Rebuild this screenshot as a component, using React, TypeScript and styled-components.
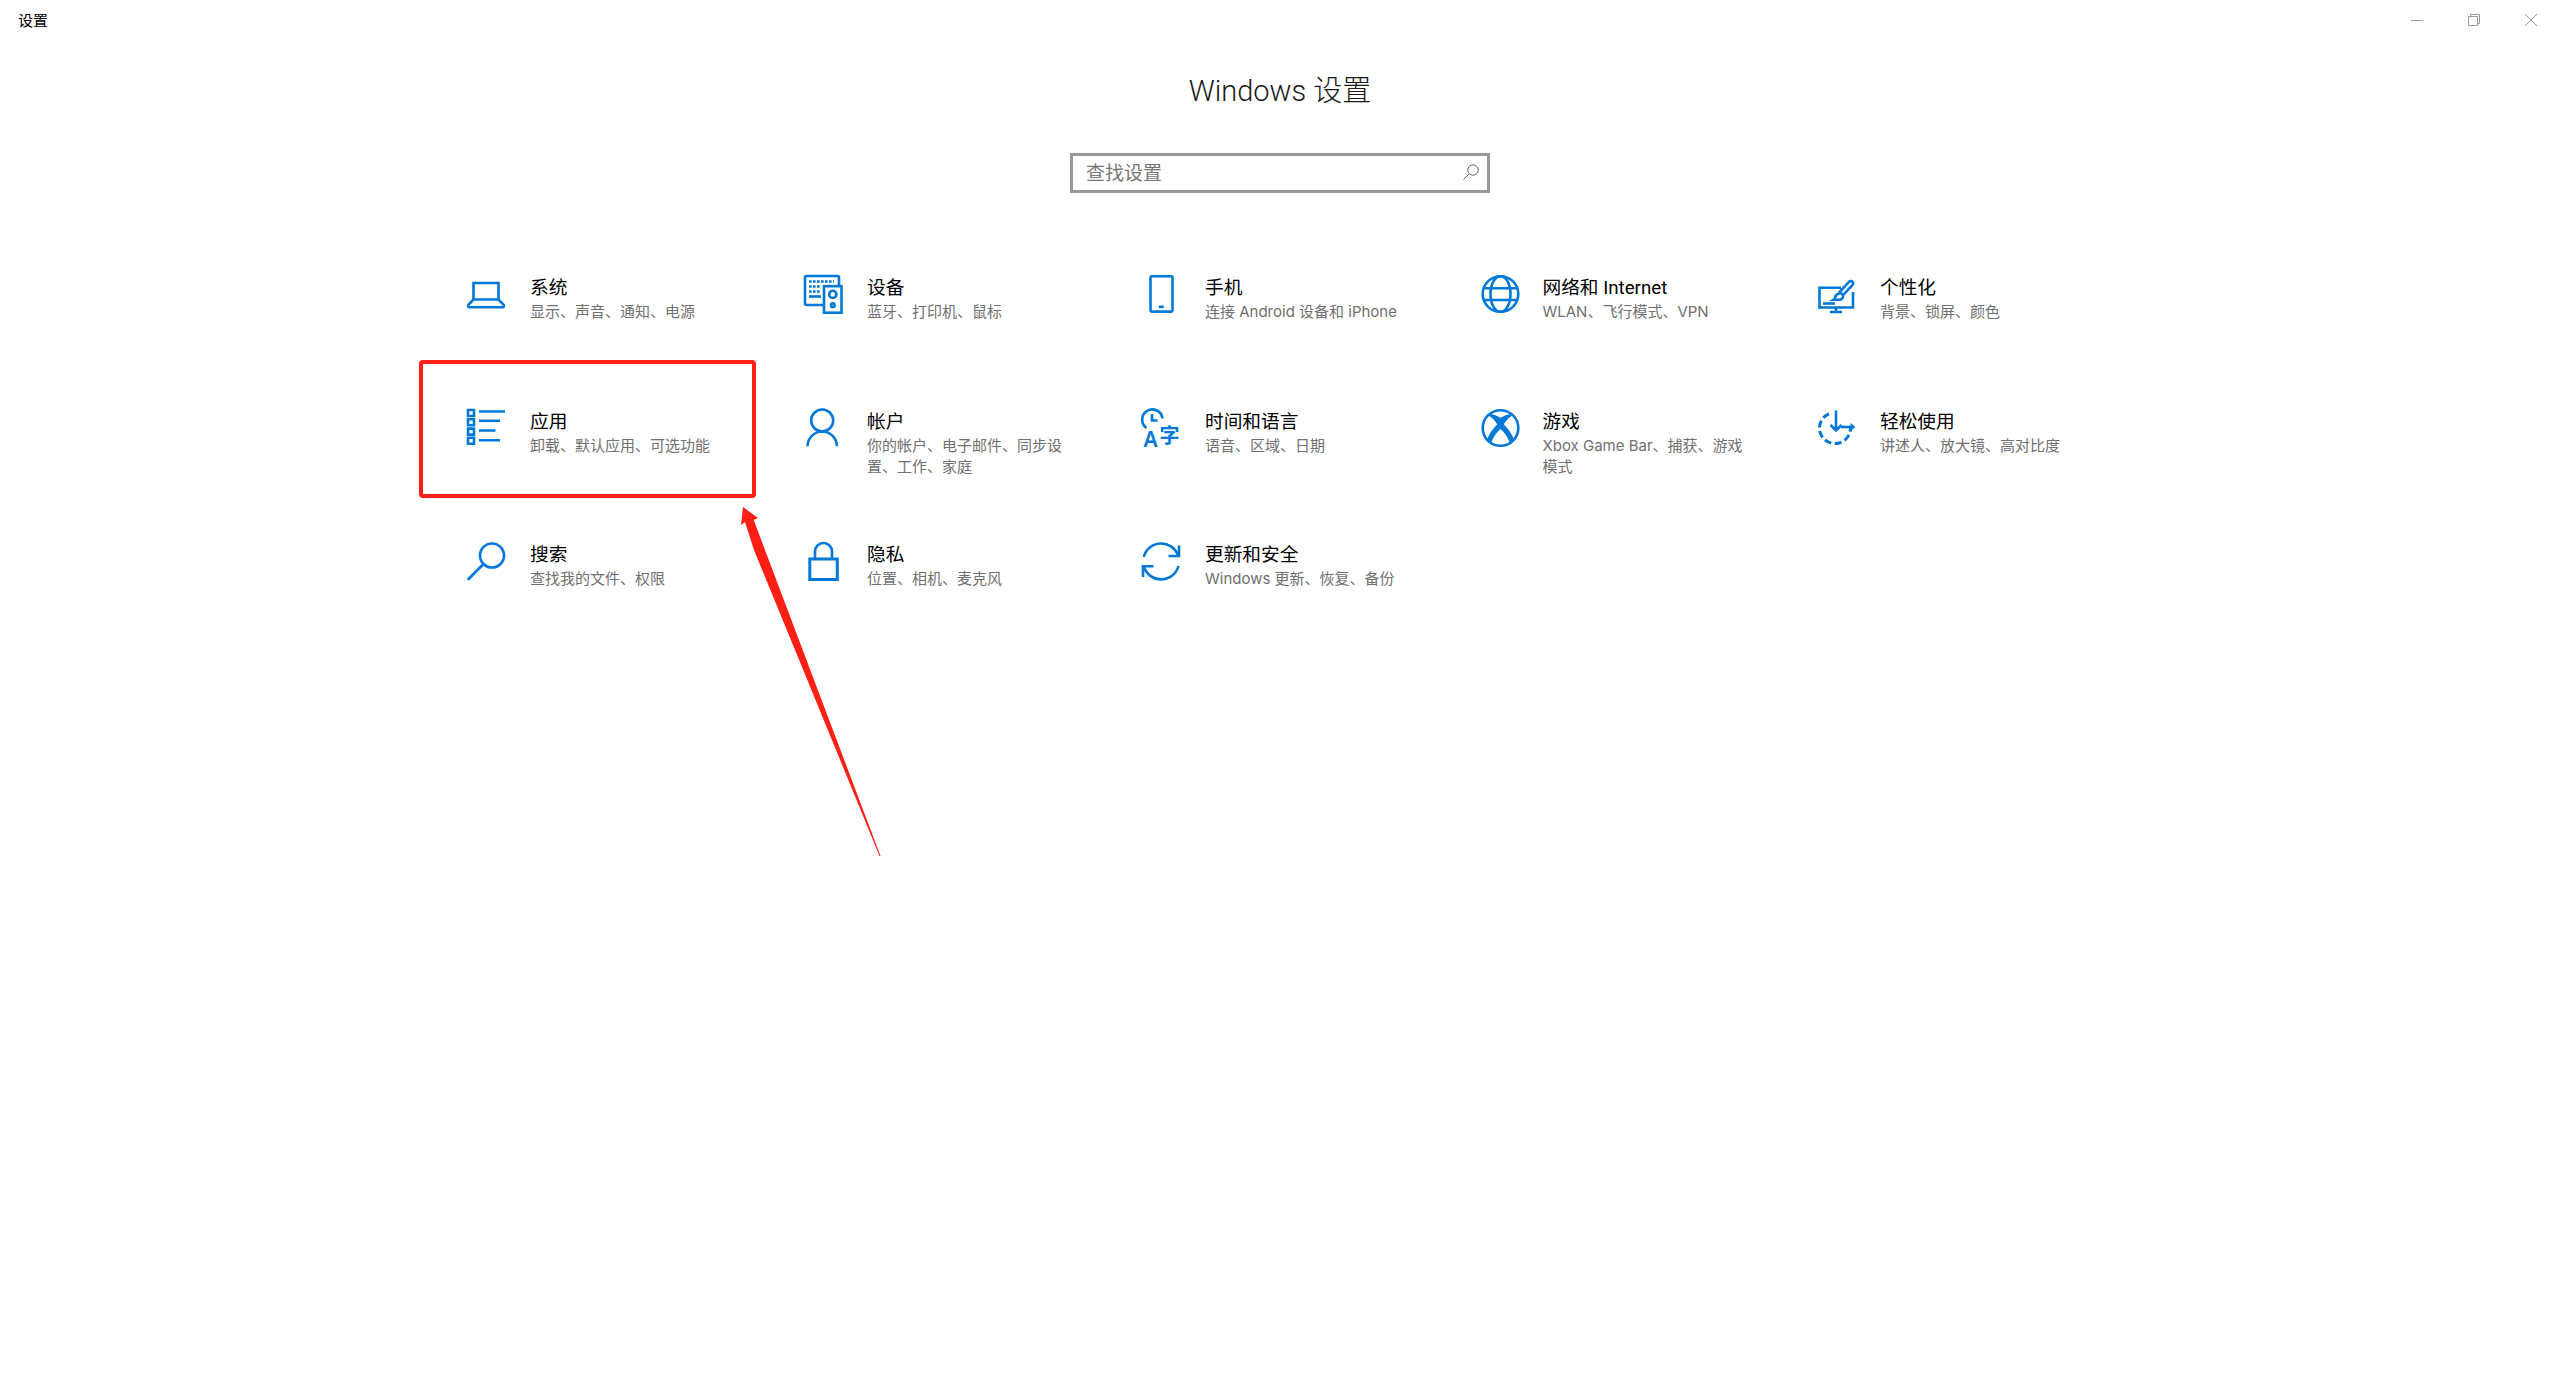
import React from "react";
import styled, { createGlobalStyle } from "styled-components";

const BLUE = "#0078d7";

const GlobalStyle = createGlobalStyle`
  html, body {
    margin: 0;
    padding: 0;
    background: #fff;
  }
  body {
    font-family: "Noto Sans", "Noto Sans CJK SC", sans-serif;
    color: #000;
  }
`;

const Page = styled.div`
  position: relative;
  width: 2560px;
  height: 1390px;
  overflow: hidden;
  background: #fff;
`;

const TitleBar = styled.header`
  display: flex;
  align-items: center;
  justify-content: space-between;
  height: 40px;
  padding-left: 18px;
`;

const WindowTitle = styled.span`
  font-size: 15px;
  line-height: 40px;
`;

const WindowControls = styled.div`
  display: flex;
  margin-right: 1px;
`;

const ControlButton = styled.div`
  display: flex;
  align-items: center;
  justify-content: center;
  width: 57px;
  height: 40px;
`;

const Heading = styled.h1`
  margin: 31px 0 0;
  font-family: Roboto, "Noto Sans CJK SC", sans-serif;
  font-size: 29px;
  line-height: 40px;
  font-weight: 300;
  text-align: center;
  color: #1a1a1a;
`;

const SearchBox = styled.div`
  display: flex;
  align-items: center;
  justify-content: space-between;
  box-sizing: border-box;
  width: 420px;
  height: 40px;
  margin: 42px auto 0;
  padding: 0 8px 2px 13px;
  border: 3px solid #999;
`;

const SearchHint = styled.span`
  font-size: 19px;
  color: #767676;
`;

const Grid = styled.main`
  display: grid;
  grid-template-columns: 337px 338px 337.5px 337.5px 337.5px;
  grid-auto-rows: 133.5px;
  margin: 35px 0 0 420px;
`;

const Tile = styled.section`
  position: relative;
  display: flex;
  padding: 46px 0 0 46px;
  box-sizing: border-box;
`;

const Highlight = styled.div`
  position: absolute;
  top: -2px;
  left: -1px;
  right: 1.5px;
  bottom: -3px;
  border: 4px solid #ff1f14;
  border-radius: 4px;
`;

const IconSlot = styled.div`
  flex: none;
  width: 40px;
  height: 40px;
  margin-right: 24px;

  svg {
    display: block;
    overflow: visible;
  }
`;

const TileText = styled.div`
  width: 212px;
`;

const TileTitle = styled.div`
  margin-top: 1px;
  font-family: Roboto, "Noto Sans CJK SC", sans-serif;
  font-size: 18.7px;
  line-height: 26px;
  color: #000;
`;

const TileSub = styled.div`
  font-family: Inter, "Noto Sans CJK SC", sans-serif;
  font-size: 15px;
  line-height: 21px;
  color: #707070;
`;

const ArrowLayer = styled.svg`
  position: absolute;
  left: 730px;
  top: 500px;
  pointer-events: none;
`;

const Line = styled.g`
  fill: none;
  stroke: ${BLUE};
  stroke-width: 2.6;
`;

const Icon = ({ children }: { children: React.ReactNode }) => (
  <svg width="40" height="40" viewBox="0 0 40 40">
    <Line>{children}</Line>
  </svg>
);

const LaptopIcon = () => (
  <Icon>
    <path d="M7.5 26V9h25v17" />
    <path d="M7.5 25.5 2.2 31v1.2c0 .6.4 1 1 1h33.6c.6 0 1-.4 1-1V31l-5.3-5.5z" />
  </Icon>
);

const DevicesIcon = () => (
  <Icon>
    <path d="M20 31H3.5A1.5 1.5 0 0 1 2 29.5V3.500A1.500 1.500 0 0 1 3.500 2h31A1.500 1.500 0 0 1 36 3.500V12" />
    <path d="M6 7.500h25M6 12.500h12M6 17.500h12" strokeDasharray="2.600 1.400" />
    <path d="M6 22.500h12" />
    <rect x="21" y="12.200" width="17.500" height="26.500" />
    <circle cx="29.800" cy="20.400" r="3.600" />
    <circle cx="29.800" cy="31.200" r="1.800" />
  </Icon>
);

const PhoneIcon = () => (
  <Icon>
    <rect x="9.500" y="2.200" width="22" height="35.400" rx="1.500" />
    <path d="M17.800 32.800h5" />
  </Icon>
);

const GlobeIcon = () => (
  <Icon>
    <circle cx="21.500" cy="20" r="17.800" />
    <ellipse cx="21.500" cy="20" rx="10" ry="17.800" />
    <path d="M4 14.300h35M4 26h35" />
  </Icon>
);

const BrushIcon = () => (
  <Icon>
    <path d="M25 13.800H3.500v19.700H37V18" />
    <path d="M20 33.500v4M14 38h12" />
    <path d="M36.400 7.800a2.200 2.200 0 0 0-3.200-.2L23.600 18l3.400 3.200 9.600-10.400a2.200 2.200 0 0 0-.2-3z" />
    <path d="M23.800 19.500c-3 .2-4.200 2-4.600 3.600-.3 1.200-.5 2-1.500 2.600h5.600c2.600 0 4-2 3.700-3.600" />
    <path d="M7 29.500h12" />
  </Icon>
);

const ListIcon = () => (
  <Icon>
    <path d="M2 2h6v6H2zM2 11.300h6v6H2zM2 20.600h6v6H2zM2 29.800h6v6H2z" />
    <path d="M13 3.500h26M13 12.800h21M13 22.500h16.500M13 32.200h21" />
  </Icon>
);

const PersonIcon = () => (
  <Icon>
    <circle cx="19.200" cy="12.500" r="11" />
    <path d="M4.500 38.200a14.700 14.700 0 0 1 29.400 0" />
  </Icon>
);

const LanguageIcon = () => (
  <svg width="40" height="40" viewBox="0 0 40 40">
    <Line>
      <path d="M5.500 20a10.200 10.200 0 1 1 16-9.600" />
      <path d="M11 6v6.500h5.500" />
    </Line>
    <text x="2.500" y="38.500" fontSize="21" fontWeight="600" fill={BLUE}>
      A
    </text>
    <text x="18.500" y="34.500" fontSize="20" fontWeight="700" fill={BLUE}>
      字
    </text>
  </svg>
);

const XboxIcon = () => (
  <svg width="40" height="40" viewBox="0 0 40 40">
    <Line>
      <circle cx="21.500" cy="20" r="17.800" />
    </Line>
    <path
      fill={BLUE}
      stroke={BLUE}
      strokeWidth="1.200"
      d="M21.500 10.500C17.500 8 13.500 6 10 7c4.500 3 7.500 6.500 9 9.500C14 21.500 10 27 8.500 32.500l3 2.500c2-6 6-11.500 10-15 4 3.500 8 9 10 15l3-2.500C33 27 29 21.500 24 16.500 25.500 13.500 28.500 10 33 7c-3.500-1-7.500 1-11.500 3.500z"
    />
  </svg>
);

const EaseIcon = () => (
  <Icon>
    <path d="M13 5.800A15.500 15.500 0 1 0 34.500 20" strokeWidth="3" strokeDasharray="7 3.500" />
    <path d="M20 2.500V22M14.500 17l5.500 5.500 5.500-5.500" />
    <path d="M25 19h12" />
    <path d="M34.500 15l5 4-5 4z" fill={BLUE} stroke="none" />
  </Icon>
);

const SearchGlassIcon = () => (
  <Icon>
    <circle cx="26" cy="14.500" r="12" />
    <path d="M17.500 23 2.500 38" strokeLinecap="round" />
  </Icon>
);

const LockIcon = () => (
  <Icon>
    <path d="M12 18v-7.500a8.500 8.500 0 0 1 17 0V18" />
    <rect x="6.800" y="18" width="27.500" height="20.500" strokeWidth="3" />
  </Icon>
);

const SyncIcon = () => (
  <Icon>
    <path d="M2.800 16A18 18 0 0 1 37 14" />
    <path d="M38 4.500V15H27.500" />
    <path d="M37.500 25A18 18 0 0 1 3 26" />
    <path d="M2 36V25.200h10.500" />
  </Icon>
);

const settings = [
  { title: "系统", sub: "显示、声音、通知、电源", icon: <LaptopIcon /> },
  { title: "设备", sub: "蓝牙、打印机、鼠标", icon: <DevicesIcon /> },
  { title: "手机", sub: "连接 Android 设备和 iPhone", icon: <PhoneIcon /> },
  { title: "网络和 Internet", sub: "WLAN、飞行模式、VPN", icon: <GlobeIcon /> },
  { title: "个性化", sub: "背景、锁屏、颜色", icon: <BrushIcon /> },
  { title: "应用", sub: "卸载、默认应用、可选功能", icon: <ListIcon />, marked: true },
  { title: "帐户", sub: "你的帐户、电子邮件、同步设置、工作、家庭", icon: <PersonIcon /> },
  { title: "时间和语言", sub: "语音、区域、日期", icon: <LanguageIcon /> },
  { title: "游戏", sub: "Xbox Game Bar、捕获、游戏模式", icon: <XboxIcon /> },
  { title: "轻松使用", sub: "讲述人、放大镜、高对比度", icon: <EaseIcon /> },
  { title: "搜索", sub: "查找我的文件、权限", icon: <SearchGlassIcon /> },
  { title: "隐私", sub: "位置、相机、麦克风", icon: <LockIcon /> },
  { title: "更新和安全", sub: "Windows 更新、恢复、备份", icon: <SyncIcon /> },
];

const App = () => {
  return (
    <Page>
      <GlobalStyle />
      <TitleBar>
        <WindowTitle>设置</WindowTitle>
        <WindowControls>
          <ControlButton>
            <svg width="12" height="12" viewBox="0 0 12 12">
              <path d="M0 6.500h12" stroke="#999" fill="none" />
            </svg>
          </ControlButton>
          <ControlButton>
            <svg width="12" height="12" viewBox="0 0 12 12">
              <path d="M.5 2.500h9v9h-9z" stroke="#999" fill="none" />
              <path d="M2.500 2.500V.5h9v9h-2" stroke="#999" fill="none" />
            </svg>
          </ControlButton>
          <ControlButton>
            <svg width="12" height="12" viewBox="0 0 12 12">
              <path d="M0 0l12 12M12 0 0 12" stroke="#999" fill="none" />
            </svg>
          </ControlButton>
        </WindowControls>
      </TitleBar>

      <Heading>Windows 设置</Heading>

      <SearchBox>
        <SearchHint>查找设置</SearchHint>
        <svg width="16" height="16" viewBox="0 0 16 16">
          <circle cx="10" cy="6" r="5.200" fill="none" stroke="#666" />
          <path d="M6.200 9.800.5 15.500" fill="none" stroke="#666" />
        </svg>
      </SearchBox>

      <Grid>
        {settings.map((item) => (
          <Tile key={item.title}>
            {item.marked && <Highlight />}
            <IconSlot>{item.icon}</IconSlot>
            <TileText>
              <TileTitle>{item.title}</TileTitle>
              <TileSub>{item.sub}</TileSub>
            </TileText>
          </Tile>
        ))}
      </Grid>

      <ArrowLayer width="160" height="360" viewBox="730 500 160 360">
        <polygon
          fill="#ff1f14"
          points="743,507 758,518 753.700,520 765,550 880.500,856 879.500,856 754,550 745,522 741,525"
        />
      </ArrowLayer>
    </Page>
  );
};

export default App;
